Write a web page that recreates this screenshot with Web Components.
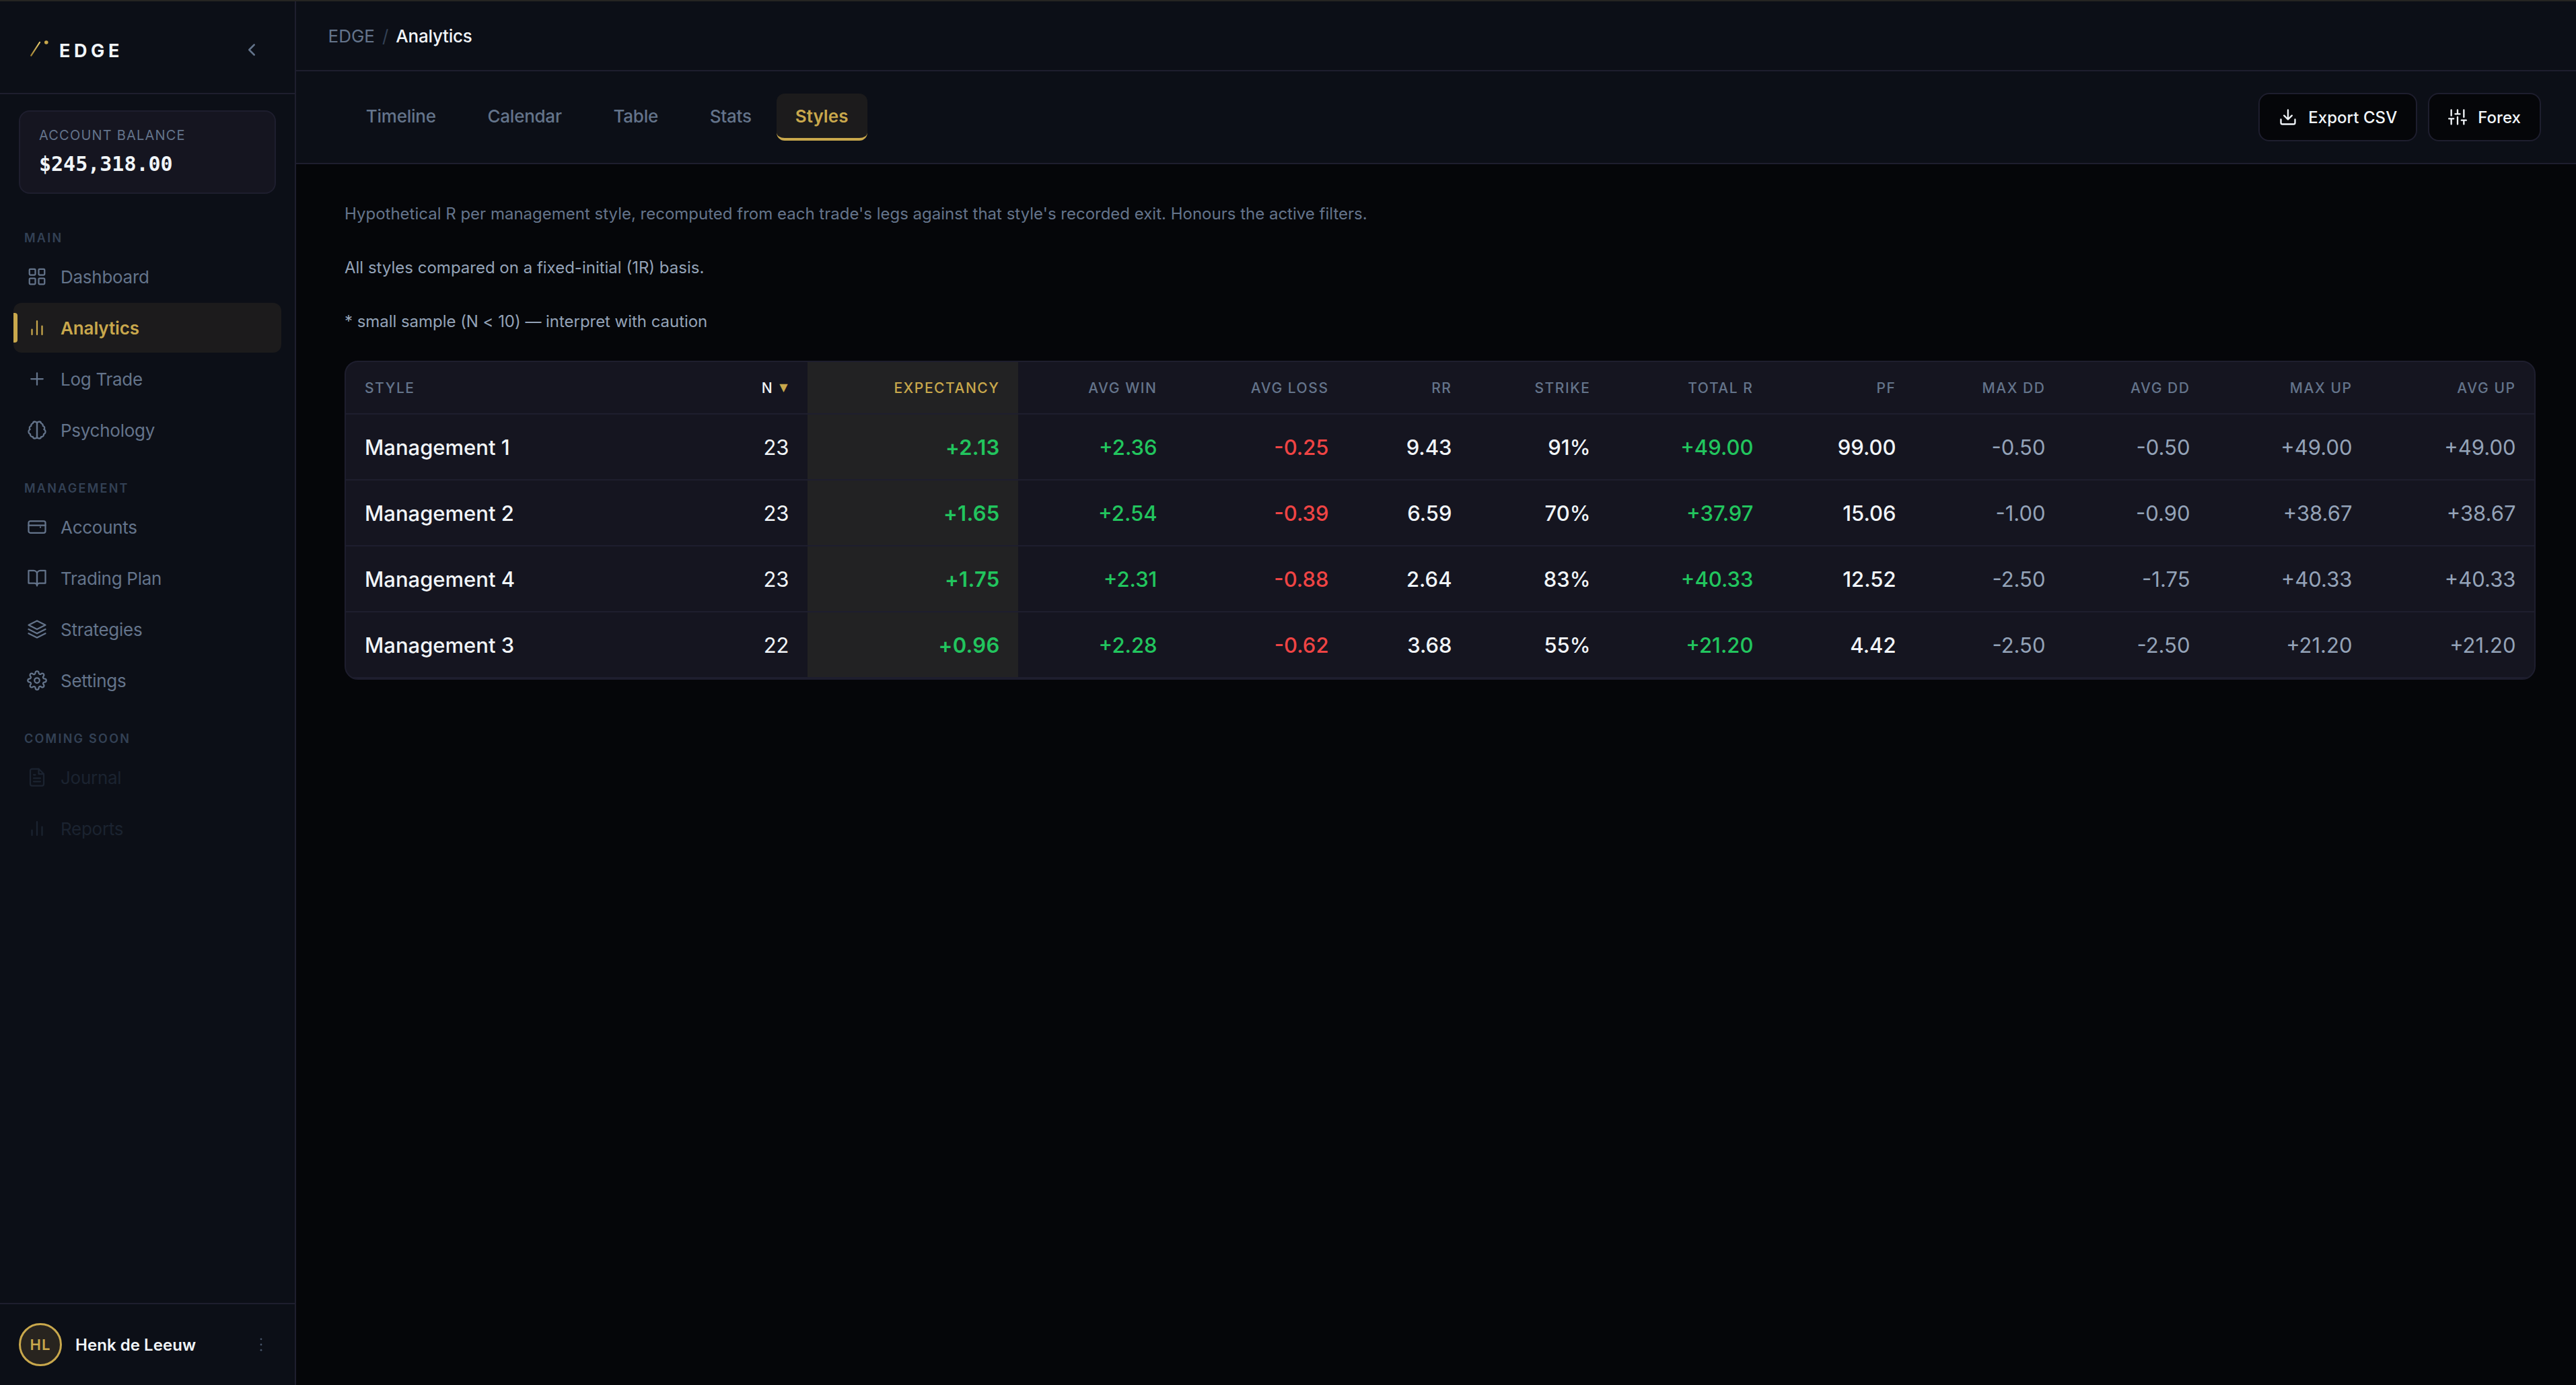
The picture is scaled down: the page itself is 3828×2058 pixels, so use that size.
<!DOCTYPE html>
<html lang="en">
<head>
<meta charset="utf-8">
<title>EDGE – Analytics</title>
<style>
  :root {
    --bg: #050609;
    --panel: #0c0f17;
    --card: #151520;
    --line: #1e1e2e;
    --gold: #c9a84c;
    --text: #f1f5f9;
    --muted: #64748b;
    --soft: #94a3b8;
    --faint: #334155;
    --green: #22c55e;
    --red: #ef4444;
  }
  body { margin: 0; background: var(--bg); color: var(--text); font-family: Inter, sans-serif; }
</style>
</head>
<body>
<edge-app></edge-app>
<script>
const ICONS = {
  grid: '<rect x="3" y="3" width="7" height="7" rx="1"/><rect x="14" y="3" width="7" height="7" rx="1"/><rect x="3" y="14" width="7" height="7" rx="1"/><rect x="14" y="14" width="7" height="7" rx="1"/>',
  bars: '<path d="M6 20v-6M12 20V4M18 20V10"/>',
  plus: '<path d="M12 5v14M5 12h14"/>',
  brain: '<path d="M9.5 2A2.5 2.5 0 0 1 12 4.5v15a2.5 2.5 0 0 1-4.96.44 2.5 2.5 0 0 1-2.96-3.08 3 3 0 0 1-.34-5.58 2.5 2.5 0 0 1 1.32-4.24 2.5 2.5 0 0 1 1.98-3A2.5 2.5 0 0 1 9.5 2Z"/><path d="M14.5 2A2.5 2.5 0 0 0 12 4.5v15a2.5 2.5 0 0 0 4.96.44 2.5 2.5 0 0 0 2.96-3.08 3 3 0 0 0 .34-5.58 2.5 2.5 0 0 0-1.32-4.24 2.5 2.5 0 0 0-1.98-3A2.5 2.5 0 0 0 14.5 2Z"/>',
  wallet: '<rect x="2" y="5" width="20" height="14" rx="2"/><path d="M2 10h20"/><circle cx="16" cy="12.3" r="0.9" fill="currentColor" stroke="none"/>',
  book: '<path d="M2 3h6a4 4 0 0 1 4 4v14a3 3 0 0 0-3-3H2z"/><path d="M22 3h-6a4 4 0 0 0-4 4v14a3 3 0 0 1 3-3h7z"/>',
  layers: '<path d="M12 2 2 7l10 5 10-5z"/><path d="m2 17 10 5 10-5"/><path d="m2 12 10 5 10-5"/>',
  gear: '<circle cx="12" cy="12" r="3"/><path d="M19.4 15a1.65 1.65 0 0 0 .33 1.82l.06.06a2 2 0 0 1 0 2.83 2 2 0 0 1-2.83 0l-.06-.06a1.65 1.65 0 0 0-1.82-.33 1.65 1.65 0 0 0-1 1.51V21a2 2 0 0 1-2 2 2 2 0 0 1-2-2v-.09A1.65 1.65 0 0 0 9 19.4a1.65 1.65 0 0 0-1.82.33l-.06.06a2 2 0 0 1-2.83 0 2 2 0 0 1 0-2.83l.06-.06a1.65 1.65 0 0 0 .33-1.82 1.65 1.65 0 0 0-1.51-1H3a2 2 0 0 1-2-2 2 2 0 0 1 2-2h.09A1.65 1.65 0 0 0 4.6 9a1.65 1.65 0 0 0-.33-1.82l-.06-.06a2 2 0 0 1 0-2.83 2 2 0 0 1 2.83 0l.06.06a1.65 1.65 0 0 0 1.82.33H9a1.65 1.65 0 0 0 1-1.51V3a2 2 0 0 1 2-2 2 2 0 0 1 2 2v.09a1.65 1.65 0 0 0 1 1.51 1.65 1.65 0 0 0 1.82-.33l.06-.06a2 2 0 0 1 2.83 0 2 2 0 0 1 0 2.83l-.06.06a1.65 1.65 0 0 0-.33 1.82V9a1.65 1.65 0 0 0 1.51 1H21a2 2 0 0 1 2 2 2 2 0 0 1-2 2h-.09a1.65 1.65 0 0 0-1.51 1z"/>',
  file: '<path d="M14 2H6a2 2 0 0 0-2 2v16a2 2 0 0 0 2 2h12a2 2 0 0 0 2-2V8z"/><path d="M14 2v6h6M16 13H8M16 17H8M10 9H8"/>',
  chevron: '<path d="m15 18-6-6 6-6"/>',
  download: '<path d="M21 15v4a2 2 0 0 1-2 2H5a2 2 0 0 1-2-2v-4"/><path d="m7 10 5 5 5-5M12 15V3"/>',
  sliders: '<path d="M4 21v-7M4 10V3M12 21v-9M12 8V3M20 21v-5M20 12V3M1 14h6M9 8h6M17 16h6"/>',
  dots: '<g fill="currentColor" stroke="none"><circle cx="12" cy="5" r="1.2"/><circle cx="12" cy="12" r="1.2"/><circle cx="12" cy="19" r="1.2"/></g>'
};

const define = (name, html, init) => customElements.define(name, class extends HTMLElement {
  connectedCallback() {
    if (this.shadowRoot) return;
    const root = this.attachShadow({ mode: 'open' });
    root.innerHTML = typeof html === 'function' ? html(this) : html;
    if (init) init(this, root);
  }
});

define('ui-icon', el => `
<style>
  :host { display: block; flex: none; width: var(--size, 30px); height: var(--size, 30px); }
  svg { display: block; width: 100%; height: 100%; fill: none; stroke: currentColor; stroke-linecap: round; stroke-linejoin: round; stroke-width: ${el.getAttribute('weight') || 1.8}; }
</style>
<svg viewBox="0 0 24 24">${ICONS[el.getAttribute('name')]}</svg>`);

define('brand-header', `
<style>
  :host { display: flex; align-items: flex-start; box-sizing: border-box; height: 140px; padding: 60px 49px 0 44px; border-bottom: 2px solid var(--line); }
  .mark { display: block; width: 30px; height: 30px; flex: none; }
  b { margin: 0 auto 0 14px; font-size: 27px; line-height: 32px; font-weight: 700; letter-spacing: 5.6px; }
  ui-icon { color: var(--muted); margin-top: -1px; }
</style>
<svg class="mark" viewBox="0 0 30 30" fill="none">
  <defs><linearGradient id="g" x1="2" y1="23" x2="15" y2="3" gradientUnits="userSpaceOnUse"><stop stop-color="#a08030"/><stop offset="1" stop-color="#e8cc70"/></linearGradient></defs>
  <path d="M2.2 22.6 15 3" stroke="url(#g)" stroke-width="2.2" stroke-linecap="round"/>
  <circle cx="24.8" cy="3" r="2.8" fill="#c9a84c"/>
</svg>
<b>EDGE</b><ui-icon name="chevron" weight="2"></ui-icon>`);

define('balance-card', `
<style>
  :host { display: block; box-sizing: border-box; height: 124px; margin: 24px 28px 0; padding: 23px 28px; border: 2px solid var(--line); border-radius: 16px; background: var(--card); }
  .label { font-size: 20px; line-height: 24px; letter-spacing: 1.2px; color: var(--muted); }
  .value { margin-top: 13px; font: 700 30px/36px "DejaVu Sans Mono", monospace; letter-spacing: 0; }
</style>
<div class="label"><slot name="label"></slot></div><div class="value"><slot></slot></div>`);

define('nav-section', `
<style>
  :host { display: flex; flex-direction: column; gap: 2px; padding: 0 20px; }
  h2 { margin: 0 0 7px; padding: 0 16px; font-size: 18px; line-height: 22px; font-weight: 600; letter-spacing: 2.25px; color: var(--faint); }
</style>
<h2></h2><slot></slot>`, (el, root) => { root.querySelector('h2').textContent = el.getAttribute('heading'); });

define('nav-item', el => `
<style>
  :host { display: flex; align-items: center; gap: 20px; position: relative; box-sizing: border-box; height: 74px; padding: 0 20px; border-radius: 12px; color: var(--muted); font-size: 26px; letter-spacing: -.27px; }
  :host([active]) { background: #1c1b1c; color: var(--gold); font-weight: 600; letter-spacing: -.12px; }
  :host([active])::before { content: ""; position: absolute; left: 0; top: 15px; width: 6px; height: 44px; border-radius: 0 4px 4px 0; background: var(--gold); }
  :host([disabled]) { color: #1b2330; }
</style>
<ui-icon name="${el.getAttribute('icon')}"></ui-icon><span><slot></slot></span>`);

define('user-footer', `
<style>
  :host { display: flex; align-items: center; box-sizing: border-box; height: 122px; margin-top: auto; padding: 0 36px 0 28px; border-top: 2px solid var(--line); }
  .avatar { display: flex; align-items: center; justify-content: center; box-sizing: border-box; width: 64px; height: 64px; border: 3px solid var(--gold); border-radius: 50%; background: #28241f; color: var(--gold); font-size: 22px; font-weight: 600; letter-spacing: 1.2px; }
  .name { margin: 0 auto 0 20px; font-size: 24px; font-weight: 600; letter-spacing: .05px; }
  ui-icon { --size: 28px; color: #475569; }
</style>
<div class="avatar">HL</div><div class="name">Henk de Leeuw</div><ui-icon name="dots"></ui-icon>`);

define('app-sidebar', `
<style>
  :host { display: flex; flex-direction: column; box-sizing: border-box; width: 440px; flex: none; border-right: 2px solid var(--line); background: var(--panel); }
  nav { display: flex; flex-direction: column; gap: 39px; padding-top: 55px; }
</style>
<brand-header></brand-header>
<balance-card><span slot="label">ACCOUNT BALANCE</span>$245,318.00</balance-card>
<nav>
  <nav-section heading="MAIN">
    <nav-item icon="grid">Dashboard</nav-item>
    <nav-item icon="bars" active>Analytics</nav-item>
    <nav-item icon="plus">Log Trade</nav-item>
    <nav-item icon="brain">Psychology</nav-item>
  </nav-section>
  <nav-section heading="MANAGEMENT">
    <nav-item icon="wallet">Accounts</nav-item>
    <nav-item icon="book">Trading Plan</nav-item>
    <nav-item icon="layers">Strategies</nav-item>
    <nav-item icon="gear">Settings</nav-item>
  </nav-section>
  <nav-section heading="COMING SOON">
    <nav-item icon="file" disabled>Journal</nav-item>
    <nav-item icon="bars" disabled>Reports</nav-item>
  </nav-section>
</nav>
<user-footer></user-footer>`);

define('bread-crumb', `
<style>
  :host { display: flex; align-items: center; gap: 11px; box-sizing: border-box; height: 106px; padding: 2px 47.5px 0; border-bottom: 2px solid var(--line); background: var(--panel); font-size: 26px; color: var(--muted); }
  i { font-style: normal; color: var(--faint); }
  b { font-weight: 500; color: var(--text); letter-spacing: -.23px; }
</style>
<span>EDGE</span><i>/</i><b>Analytics</b>`);

define('tab-item', `
<style>
  :host { display: flex; align-items: center; box-sizing: border-box; height: 70px; padding: 0 37px 0 39.8px; border-bottom: 4px solid transparent; border-radius: 12px; font-size: 26px; font-weight: 500; letter-spacing: -.25px; color: var(--muted); }
  :host([active]) { padding: 0 28px; border-bottom-color: var(--gold); background: #1c1b1c; color: var(--gold); font-weight: 600; letter-spacing: .05px; }
</style>
<slot></slot>`);

define('tool-button', el => `
<style>
  :host { display: flex; align-items: center; gap: 16px; box-sizing: border-box; height: 72px; padding: 0 28px; border: 2px solid var(--line); border-radius: 16px; background: var(--bg); font-size: 24px; font-weight: 500; letter-spacing: .04px; }
  ui-icon { --size: 28px; }
</style>
<ui-icon name="${el.getAttribute('icon')}" weight="2"></ui-icon><span><slot></slot></span>`);

define('tool-bar', `
<style>
  :host { display: flex; align-items: center; justify-content: space-between; box-sizing: border-box; height: 138px; padding: 0 52px 0 64px; border-bottom: 2px solid var(--line); background: var(--panel); }
  div { display: flex; align-items: center; }
  .actions { gap: 16px; }
</style>
<div><tab-item>Timeline</tab-item><tab-item>Calendar</tab-item><tab-item>Table</tab-item><tab-item>Stats</tab-item><tab-item active>Styles</tab-item></div>
<div class="actions"><tool-button icon="download">Export CSV</tool-button><tool-button icon="sliders">Forex</tool-button></div>`);

const WIDTHS = [560, 126, 313, 234, 255, 183, 206, 242, 212, 222, 215, 241, 243];
const HEADS = ['STYLE', 'N', 'EXPECTANCY', 'AVG WIN', 'AVG LOSS', 'RR', 'STRIKE', 'TOTAL R', 'PF', 'MAX DD', 'AVG DD', 'MAX UP', 'AVG UP'];
const KINDS = ['name', 'n', 'exp', 'pos', 'neg', 'val', 'val', 'pos', 'val', 'dim', 'dim', 'dim', 'dim'];
const ROWS = [
  ['Management 1', '23', '+2.13', '+2.36', '-0.25', '9.43', '91%', '+49.00', '99.00', '-0.50', '-0.50', '+49.00', '+49.00'],
  ['Management 2', '23', '+1.65', '+2.54', '-0.39', '6.59', '70%', '+37.97', '15.06', '-1.00', '-0.90', '+38.67', '+38.67'],
  ['Management 4', '23', '+1.75', '+2.31', '-0.88', '2.64', '83%', '+40.33', '12.52', '-2.50', '-1.75', '+40.33', '+40.33'],
  ['Management 3', '22', '+0.96', '+2.28', '-0.62', '3.68', '55%', '+21.20', '4.42', '-2.50', '-2.50', '+21.20', '+21.20']
];

define('styles-table', () => `
<style>
  :host { display: block; box-sizing: border-box; border: 2px solid var(--line); border-radius: 20px; overflow: hidden; background: var(--card); }
  table { width: 100%; table-layout: fixed; border-collapse: separate; border-spacing: 0; }
  th, td { box-sizing: border-box; padding: 0 27.5px 0 28px; text-align: right; white-space: nowrap; border-bottom: 2px solid var(--line); }
  th { height: 78px; font-size: 21px; font-weight: 500; letter-spacing: 1.55px; color: var(--muted); }
  td { height: 98px; font-size: 31px; font-weight: 500; letter-spacing: 0; color: var(--text); }
  .name { text-align: left; }
  .exp { background: #222223; }
  th.n { color: var(--text); }
  th.exp { color: var(--gold); }
  th.n span { display: flex; align-items: center; justify-content: flex-end; gap: 9px; padding-right: 2px; }
  th.n i { font: 16px/20px "DejaVu Sans", sans-serif; letter-spacing: 0; color: var(--gold); }
  td.n, td.dim { font-weight: 400; }
  td.exp { color: var(--green); font-weight: 600; letter-spacing: .25px; }
  td.pos { color: var(--green); }
  td.neg { color: var(--red); }
  td.dim { color: var(--soft); }
</style>
<table>
  <colgroup>${WIDTHS.map(w => `<col style="width:${w}px">`).join('')}</colgroup>
  <thead><tr>${HEADS.map((h, i) => `<th class="${KINDS[i]}">${h === 'N' ? '<span>N<i>▼</i></span>' : h}</th>`).join('')}</tr></thead>
  <tbody>${ROWS.map(r => `<tr>${r.map((c, i) => `<td class="${KINDS[i]}">${c}</td>`).join('')}</tr>`).join('')}</tbody>
</table>`);

define('styles-view', `
<style>
  :host { display: flex; flex-direction: column; padding: 58px 60px 0 72px; font-size: 24px; color: var(--soft); }
  p { margin: 0 0 48px; line-height: 32px; }
  .lead { color: var(--muted); }
  .last { margin-bottom: 42px; letter-spacing: -.04px; }
</style>
<p class="lead">Hypothetical R per management style, recomputed from each trade's legs against that style's recorded exit. Honours the active filters.</p>
<p>All styles compared on a fixed-initial (1R) basis.</p>
<p class="last">* small sample (N &lt; 10) — interpret with caution</p>
<styles-table></styles-table>`);

define('edge-app', `
<style>
  :host { display: flex; position: relative; width: 3828px; height: 2058px; overflow: hidden; background: var(--bg); -webkit-font-smoothing: antialiased; }
  :host::before { content: ""; position: absolute; inset: 0 0 auto 0; height: 2px; background: #262522; }
  main { flex: 1; display: flex; flex-direction: column; min-width: 0; }
</style>
<app-sidebar></app-sidebar>
<main><bread-crumb></bread-crumb><tool-bar></tool-bar><styles-view></styles-view></main>`);
</script>
</body>
</html>
